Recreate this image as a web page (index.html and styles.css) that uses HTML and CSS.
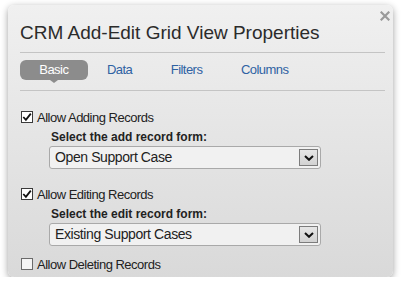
FILE: index.html
```html
<!DOCTYPE html>
<html>
<head>
<meta charset="utf-8">
<link rel="stylesheet" href="styles.css">
</head>
<body>
<div class="dialog">
  <span class="close"><svg width="10" height="10" viewBox="0 0 10 10"><path d="M1.5 1.5L8.5 8.5M8.5 1.5L1.5 8.5" stroke="#9a9a9a" stroke-width="2.2" stroke-linecap="square"/></svg></span>
  <h1 class="title">CRM Add-Edit Grid View Properties</h1>
  <nav class="tabs">
    <span class="tab active">Basic</span>
    <span class="tab">Data</span>
    <span class="tab">Filters</span>
    <span class="tab">Columns</span>
  </nav>
  <div class="content">
    <div class="row first">
      <span class="cb"><svg width="10" height="10" viewBox="0 0 10 10"><polyline points="1.3,5 3.9,7.8 8.8,1.6" fill="none" stroke="#111" stroke-width="1.8"/></svg></span>
      <span class="lbl">Allow Adding Records</span>
    </div>
    <div class="field-label">Select the add record form:</div>
    <div class="select">
      <span class="sel-text">Open Support Case</span>
      <span class="sel-btn"><svg width="10" height="6" viewBox="0 0 10 6"><polyline points="1,1 5,4.8 9,1" fill="none" stroke="#111" stroke-width="2"/></svg></span>
    </div>
    <div class="row second">
      <span class="cb"><svg width="10" height="10" viewBox="0 0 10 10"><polyline points="1.3,5 3.9,7.8 8.8,1.6" fill="none" stroke="#111" stroke-width="1.8"/></svg></span>
      <span class="lbl">Allow Editing Records</span>
    </div>
    <div class="field-label">Select the edit record form:</div>
    <div class="select">
      <span class="sel-text">Existing Support Cases</span>
      <span class="sel-btn"><svg width="10" height="6" viewBox="0 0 10 6"><polyline points="1,1 5,4.8 9,1" fill="none" stroke="#111" stroke-width="2"/></svg></span>
    </div>
    <div class="row third">
      <span class="cb unchecked"></span>
      <span class="lbl">Allow Deleting Records</span>
    </div>
  </div>
</div>
</body>
</html>
```
FILE: styles.css
```css
html, body {
  margin: 0;
  padding: 0;
  background: #ffffff;
}
body {
  font-family: "Liberation Sans", Arial, sans-serif;
  color: #222;
}
.dialog {
  position: relative;
  box-sizing: border-box;
  margin: 5px 0 0 8px;
  width: 385px;
  height: 272px;
  padding: 17px 8px 0 12px;
  border-radius: 6px;
  background: linear-gradient(#f0f0f0, #d9d9d9);
  box-shadow: 0 2px 7px rgba(0, 0, 0, 0.38);
}
.close {
  position: absolute;
  top: 6px;
  right: 3px;
  width: 10px;
  height: 10px;
  display: block;
}
.close svg { display: block; }
.title {
  margin: 0;
  font-size: 19px;
  line-height: 22px;
  font-weight: normal;
  color: #2b2b2b;
  padding-bottom: 8px;
  border-bottom: 1px solid #c4c4c4;
}
.tabs {
  display: flex;
  margin-top: 7px;
  padding-bottom: 10px;
  border-bottom: 1px solid #c4c4c4;
}
.tab {
  position: relative;
  padding: 0 19.3px;
  height: 20px;
  line-height: 20px;
  font-size: 13px;
  letter-spacing: -0.55px;
  color: #2f62a3;
}
.tab.active {
  background: #8c8c8c;
  color: #ffffff;
  border-radius: 6px;
}
.tab.active::after {
  content: "";
  position: absolute;
  left: 50%;
  bottom: -3px;
  margin-left: -4px;
  border-left: 4px solid transparent;
  border-right: 4px solid transparent;
  border-top: 3px solid #8c8c8c;
}
.content {
  display: flex;
  flex-direction: column;
}
.row {
  display: flex;
  align-items: flex-start;
  height: 16px;
  padding-left: 1px;
}
.row.first { margin-top: 19px; }
.row.second { margin-top: 18px; }
.row.third { margin-top: 11px; }
.cb {
  box-sizing: border-box;
  width: 12px;
  height: 12px;
  margin-top: 1px;
  border: 1px solid #3a3a3a;
  background: #ffffff;
  display: flex;
  align-items: center;
  justify-content: center;
}
.cb.unchecked {
  border-color: #6a6a6a;
  background: #f4f4f4;
}
.cb svg { display: block; }
.lbl {
  margin-left: 4px;
  font-size: 13px;
  line-height: 16px;
  letter-spacing: -0.5px;
  color: #222;
}
.field-label {
  margin-top: 4px;
  padding-left: 31px;
  font-size: 12px;
  line-height: 15px;
  font-weight: bold;
  color: #222;
}
.select {
  box-sizing: border-box;
  display: flex;
  align-items: center;
  margin-top: 1px;
  margin-left: 29px;
  width: 272px;
  height: 23px;
  border: 1px solid #a9a9a9;
  border-radius: 3px;
  background: #f1f1f1;
}
.sel-text {
  flex: 1;
  padding-left: 5px;
  font-size: 14px;
  line-height: 21px;
  letter-spacing: -0.4px;
  color: #222;
}
.sel-btn {
  box-sizing: border-box;
  width: 19px;
  height: 17px;
  margin-right: 2px;
  border: 1px solid #7c7c7c;
  background: linear-gradient(#e6e6e6, #d2d2d2);
  display: flex;
  align-items: center;
  justify-content: center;
}
.sel-btn svg { display: block; }
```
